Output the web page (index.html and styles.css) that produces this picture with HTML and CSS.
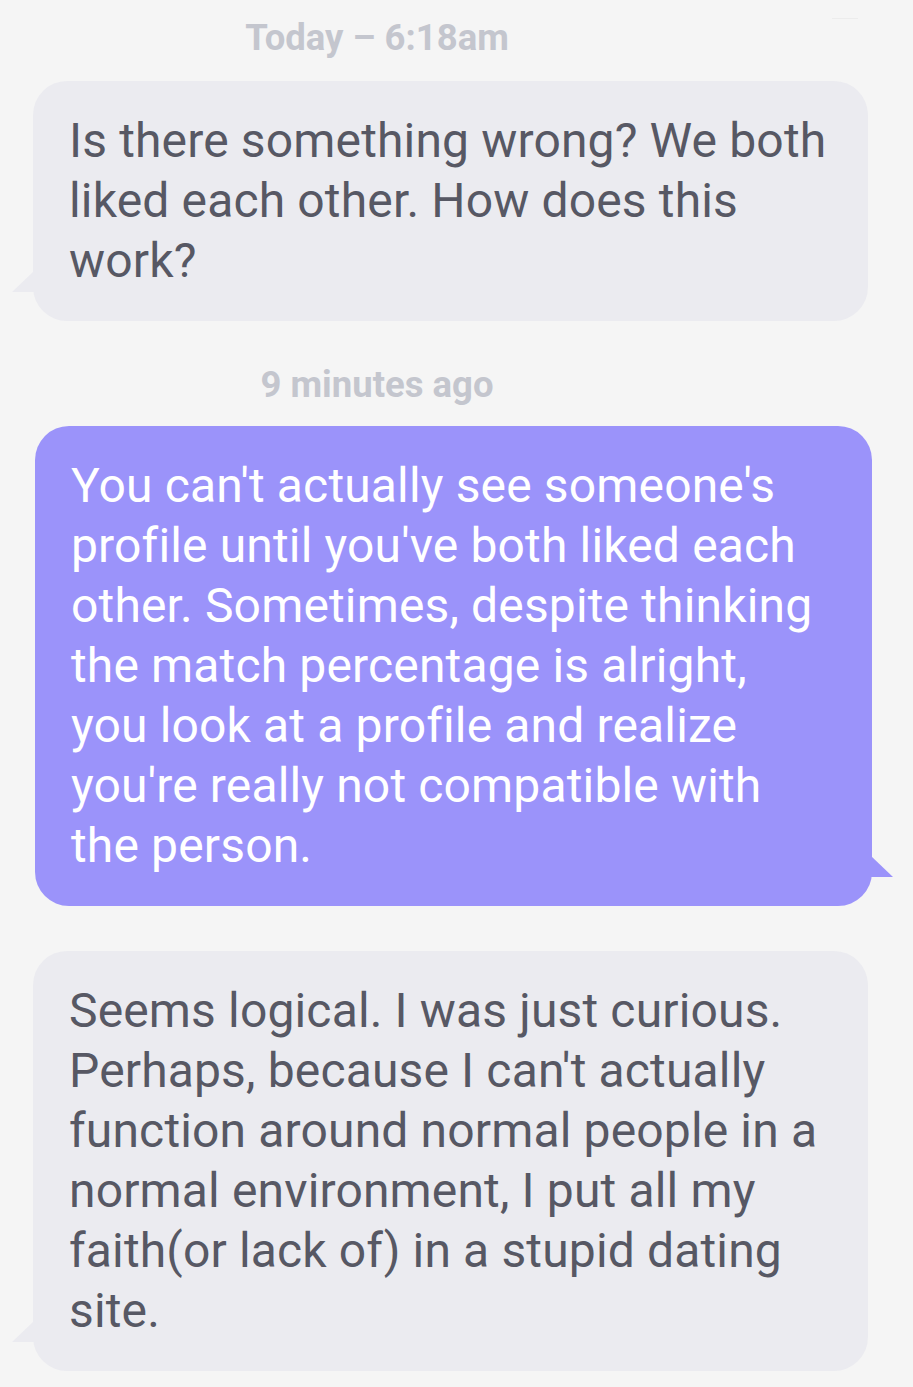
FILE: index.html
```html
<!DOCTYPE html>
<html>
<head>
<meta charset="utf-8">
<link rel="stylesheet" href="styles.css">
</head>
<body>
<div class="thread">
  <div class="stamp">Today – 6:18am</div>
  <div class="bubble in">Is there something wrong? We both liked each other. How does this work?</div>
  <div class="stamp second">9 minutes ago</div>
  <div class="bubble out">You can't actually see someone's profile until you've both liked each other. Sometimes, despite thinking the match percentage is alright, you look at a profile and realize you're really not compatible with the person.</div>
  <div class="bubble in third">Seems logical. I was just curious. Perhaps, because I can't actually function around normal people in a normal environment, I put all my faith(or lack of) in a stupid dating site.</div>
</div>
<div class="edge-mark"></div>
</body>
</html>
```
FILE: styles.css
```css
html, body {
  margin: 0;
  padding: 0;
  background: #f5f5f5;
}
body {
  position: relative;
  font-family: Roboto, "Noto Sans", sans-serif;
  width: 913px;
  height: 1387px;
  overflow: hidden;
}
.thread {
  display: flex;
  flex-direction: column;
  padding-top: 16px;
}
.stamp {
  width: 754px;
  text-align: center;
  font-weight: 700;
  font-size: 36.5px;
  line-height: 44px;
  color: #c4c6ce;
  margin-bottom: 21px;
}
.stamp.second {
  margin-top: 42px;
  margin-bottom: 19px;
}
.bubble {
  position: relative;
  box-sizing: border-box;
  border-radius: 34px;
  padding: 30px 34px 30px 36px;
  font-size: 48px;
  line-height: 60px;
  letter-spacing: 0.15px;
}
.bubble.in {
  margin-left: 33px;
  width: 835px;
  background: #ebebf0;
  color: #575864;
}
.bubble.out {
  margin-left: 35px;
  width: 837px;
  padding-right: 52px;
  background: #9b93fa;
  color: #ffffff;
}
.bubble.third {
  margin-top: 45px;
}
.bubble.in::after,
.bubble.out::after {
  content: "";
  position: absolute;
  bottom: 29px;
  width: 22px;
  height: 21px;
}
.bubble.in::after {
  left: -21px;
  background: #ebebf0;
  clip-path: polygon(100% 0, 100% 100%, 0 100%);
}
.bubble.out::after {
  right: -21px;
  background: #9b93fa;
  clip-path: polygon(0 0, 100% 100%, 0 100%);
}
.edge-mark {
  position: absolute;
  top: 18px;
  left: 832px;
  width: 26px;
  height: 1px;
  background: #ececec;
}
```
